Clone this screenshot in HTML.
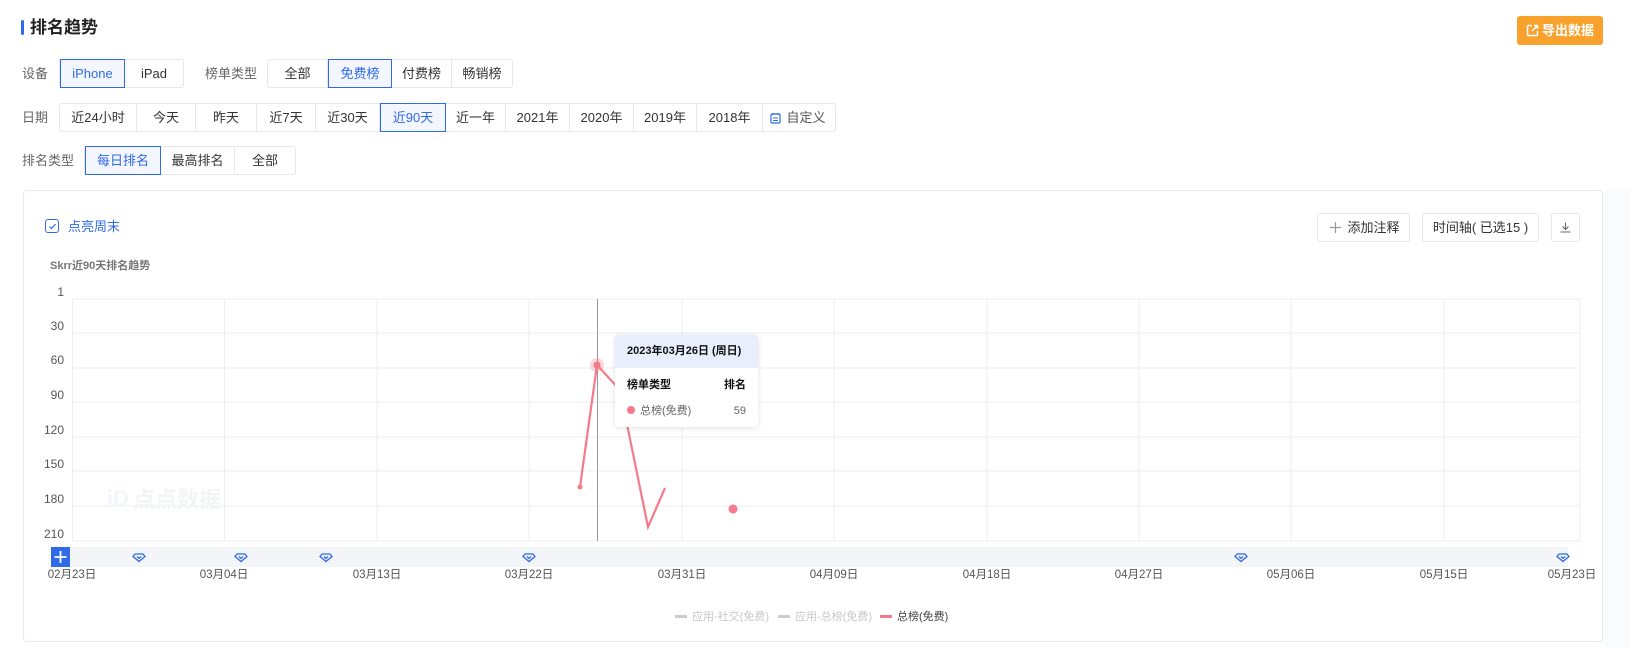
<!DOCTYPE html>
<html><head><meta charset="utf-8"><style>
*{margin:0;padding:0;box-sizing:border-box}
body{width:1629px;height:648px;background:#fff;font-family:"Liberation Sans","Noto Sans CJK SC",sans-serif;color:#333;position:relative;overflow:hidden;font-size:13px}
.a{position:absolute}
.lbl{position:absolute;color:#666;font-size:13px;line-height:29px}
.grp{position:absolute;display:flex;height:29px;border:1px solid #e4e7ed;border-radius:3px;background:#fff}
.grp div{height:27px;line-height:27px;text-align:center;border-right:1px solid #e4e7ed;font-size:13px;color:#333}
.grp div:last-child{border-right:none}
.grp div.on{border:1px solid #2f6ae8;color:#2f6ae8;background:#f3f6fe;margin:-1px 0;height:29px;line-height:27px}
.btn{position:absolute;height:29px;border:1px solid #e4e7ed;border-radius:3px;font-size:13px;line-height:27px;text-align:center;color:#333;background:#fff}
</style></head><body>
<div class="a" style="left:1605px;top:190px;width:24px;height:458px;background:#fafbfc"></div>
<div class="a" style="left:21px;top:20px;width:3px;height:15px;background:#2f6ae8;border-radius:2px"></div>
<div class="a" style="left:30px;top:17px;font-size:17px;font-weight:bold;line-height:22px;color:#222">排名趋势</div>
<div class="a" style="left:1517px;top:16px;width:86px;height:29px;background:#f8a22d;border-radius:3px;color:#fff;font-size:13px;font-weight:bold;line-height:29px;padding-left:25px">导出数据
<svg class="a" style="left:9px;top:8px" width="13" height="13" viewBox="0 0 13 13"><path d="M6 1.5H2.5a1 1 0 0 0-1 1v8a1 1 0 0 0 1 1h8a1 1 0 0 0 1-1V7" fill="none" stroke="#fff" stroke-width="1.5"/><path d="M8 1.5h3.5V5M11.5 1.5L6 7" fill="none" stroke="#fff" stroke-width="1.5"/></svg></div>

<div class="lbl" style="left:22px;top:59px">设备</div>
<div class="grp" style="left:59px;top:59px"><div class="on" style="width:65px">iPhone</div><div style="width:58px">iPad</div></div>
<div class="lbl" style="left:205px;top:59px">榜单类型</div>
<div class="grp" style="left:267px;top:59px"><div style="width:60px">全部</div><div class="on" style="width:64px">免费榜</div><div style="width:60px">付费榜</div><div style="width:60px">畅销榜</div></div>

<div class="lbl" style="left:22px;top:103px">日期</div>
<div class="grp" style="left:59px;top:103px"><div style="width:77px">近24小时</div><div style="width:59px">今天</div><div style="width:61px">昨天</div><div style="width:59px">近7天</div><div style="width:64px">近30天</div><div class="on" style="width:66px">近90天</div><div style="width:60px">近一年</div><div style="width:64px">2021年</div><div style="width:64px">2020年</div><div style="width:63px">2019年</div><div style="width:66px">2018年</div><div style="width:72px;padding-left:14px;color:#555">自定义</div></div>
<svg class="a" style="left:770px;top:112px" width="11" height="12" viewBox="0 0 11 12"><rect x="1" y="2" width="9" height="9" rx="1" fill="none" stroke="#2f6ae8" stroke-width="1.2"/><path d="M3 1v2M8 1v2M3 6h5M3 8.5h5" stroke="#2f6ae8" stroke-width="1.1"/></svg>

<div class="lbl" style="left:22px;top:146px">排名类型</div>
<div class="grp" style="left:84px;top:146px"><div class="on" style="width:76px">每日排名</div><div style="width:74px">最高排名</div><div style="width:60px">全部</div></div>

<div class="a" style="left:23px;top:190px;width:1580px;height:452px;border:1px solid #e8eaef;border-radius:4px;background:#fff"></div>
<div class="a" style="left:45px;top:219px;width:14px;height:14px;border:1.3px solid #2f6ae8;border-radius:3px"></div>
<svg class="a" style="left:47.5px;top:221.5px" width="9" height="9" viewBox="0 0 9 9"><path d="M1.5 4.5l2 2 4-4.5" fill="none" stroke="#2f6ae8" stroke-width="1.2"/></svg>
<div class="a" style="left:68px;top:218px;color:#2f6ae8;font-size:13px;line-height:18px">点亮周末</div>
<div class="btn" style="left:1317px;top:213px;width:93px;padding-left:20px">添加注释</div>
<svg class="a" style="left:1330px;top:222px" width="11" height="11"><path d="M5.5 0v11M0 5.5h11" stroke="#999" stroke-width="1.2"/></svg>
<div class="btn" style="left:1422px;top:213px;width:117px">时间轴( 已选15 )</div>
<div class="btn" style="left:1551px;top:213px;width:29px"></div>
<svg class="a" style="left:1560px;top:222px" width="11" height="11"><path d="M5.5 0.5v6.5M2.5 4.5l3 3 3-3M0.5 10h10" fill="none" stroke="#666" stroke-width="1.1"/></svg>
<div class="a" style="left:50px;top:258px;font-size:11px;font-weight:bold;color:#777;line-height:16px">Skrr近90天排名趋势</div>

<svg class="a" style="left:0;top:0" width="1629" height="648">
<g font-family="Liberation Sans, Noto Sans CJK SC, sans-serif" font-size="12" fill="#555">
<g stroke="#eceef2" stroke-width="1">
<line x1="72" y1="299" x2="1580" y2="299"/><line x1="72" y1="333" x2="1580" y2="333"/><line x1="72" y1="368" x2="1580" y2="368"/><line x1="72" y1="402" x2="1580" y2="402"/><line x1="72" y1="437" x2="1580" y2="437"/><line x1="72" y1="471" x2="1580" y2="471"/><line x1="72" y1="506" x2="1580" y2="506"/><line x1="72" y1="541" x2="1580" y2="541"/>
<line x1="72.5" y1="299" x2="72.5" y2="541"/><line x1="224.5" y1="299" x2="224.5" y2="541"/><line x1="377" y1="299" x2="377" y2="541"/><line x1="529" y1="299" x2="529" y2="541"/><line x1="682" y1="299" x2="682" y2="541"/><line x1="834" y1="299" x2="834" y2="541"/><line x1="987" y1="299" x2="987" y2="541"/><line x1="1139" y1="299" x2="1139" y2="541"/><line x1="1291" y1="299" x2="1291" y2="541"/><line x1="1444" y1="299" x2="1444" y2="541"/><line x1="1580" y1="299" x2="1580" y2="541"/>
</g>
<g text-anchor="end"><text x="64" y="296">1</text><text x="64" y="330">30</text><text x="64" y="364">60</text><text x="64" y="399">90</text><text x="64" y="434">120</text><text x="64" y="468">150</text><text x="64" y="503">180</text><text x="64" y="538">210</text></g>
<text x="107" y="506" font-size="22" font-weight="bold" fill="#f2f5fa">iD</text><text x="133" y="507" font-size="22" font-weight="bold" fill="#f3f4f6">点点数据</text>
<line x1="597.5" y1="299" x2="597.5" y2="541" stroke="#999" stroke-width="1"/>
<polyline points="580,487 597,365 620,390 648,527 665,488" fill="none" stroke="#f67a8a" stroke-width="2.2"/>
<circle cx="580" cy="487" r="2.5" fill="#f67a8a"/>
<circle cx="597" cy="365" r="7" fill="#f67a8a" opacity="0.3"/><circle cx="597" cy="365" r="3.5" fill="#f67a8a"/>
<circle cx="733" cy="509" r="4.5" fill="#f67a8a"/>
<rect x="51" y="547" width="1517" height="20" fill="#f3f5f8"/>
<rect x="51" y="547" width="19" height="20" fill="#2f6ae8"/><path d="M60.5 551v12M54.5 557h12" stroke="#fff" stroke-width="1.8"/>
<g fill="none" stroke="#2f6ae8" stroke-width="1.3">
<path d="M135 554h8l2 2.5-6 5-6-5z M137 556.5l2 2 2-2"/>
<path transform="translate(102,0)" d="M135 554h8l2 2.5-6 5-6-5z M137 556.5l2 2 2-2"/>
<path transform="translate(187,0)" d="M135 554h8l2 2.5-6 5-6-5z M137 556.5l2 2 2-2"/>
<path transform="translate(390,0)" d="M135 554h8l2 2.5-6 5-6-5z M137 556.5l2 2 2-2"/>
<path transform="translate(1102,0)" d="M135 554h8l2 2.5-6 5-6-5z M137 556.5l2 2 2-2"/>
<path transform="translate(1424,0)" d="M135 554h8l2 2.5-6 5-6-5z M137 556.5l2 2 2-2"/>
</g>
<g text-anchor="middle" font-size="11.5"><text x="72" y="578">02月23日</text><text x="224" y="578">03月04日</text><text x="377" y="578">03月13日</text><text x="529" y="578">03月22日</text><text x="682" y="578">03月31日</text><text x="834" y="578">04月09日</text><text x="987" y="578">04月18日</text><text x="1139" y="578">04月27日</text><text x="1291" y="578">05月06日</text><text x="1444" y="578">05月15日</text><text x="1572" y="578">05月23日</text></g>
<g font-size="11"><rect x="675" y="615" width="12" height="3" fill="#ccc"/><text x="692" y="620" fill="#c8c8c8">应用-社交(免费)</text>
<rect x="778" y="615" width="12" height="3" fill="#ccc"/><text x="795" y="620" fill="#c8c8c8">应用-总榜(免费)</text>
<rect x="880" y="615" width="12" height="3" fill="#f67a8a"/><text x="897" y="620" fill="#444">总榜(免费)</text></g>
</g>
</svg>

<div class="a" style="left:615px;top:335px;width:143px;height:92px;background:#fff;border-radius:3px;box-shadow:0 1px 6px rgba(0,0,0,0.12);overflow:hidden;font-size:11px">
<div style="height:33px;background:#e8eefb;padding-left:12px;line-height:33px;font-weight:bold;color:#111">2023年03月26日 (周日)</div>
<div style="display:flex;justify-content:space-between;padding:0 12px;margin-top:9px;font-weight:bold;color:#111;line-height:16px"><span>榜单类型</span><span>排名</span></div>
<div style="display:flex;justify-content:space-between;padding:0 12px;margin-top:10px;color:#666;line-height:16px"><span><span style="display:inline-block;width:8px;height:8px;border-radius:50%;background:#f67a8a;margin-right:5px"></span>总榜(免费)</span><span>59</span></div>
</div>
</body></html>
